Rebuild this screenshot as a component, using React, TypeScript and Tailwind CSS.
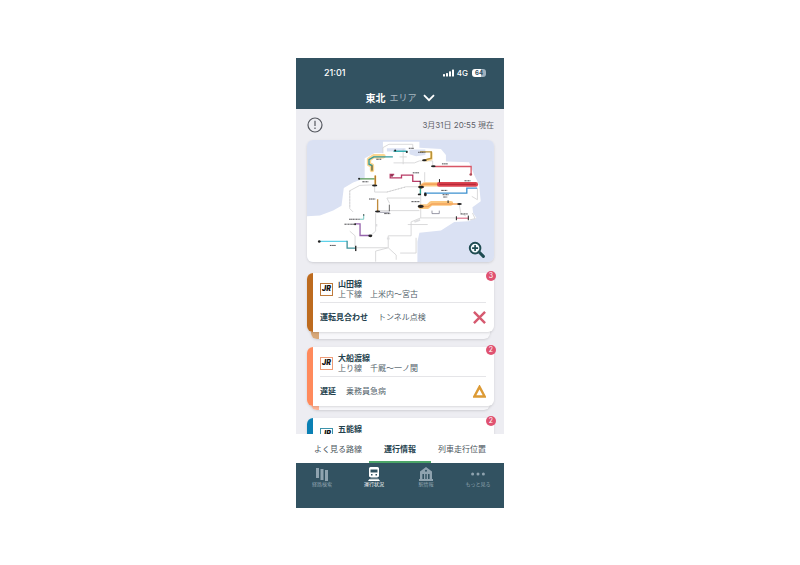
import { useState } from "react";

type Status = "stopped" | "delayed";

type Line = {
  name: string;
  section?: string;
  status?: Status;
  label?: string;
  cause?: string;
  count: number;
  bar: string;
  frame: string;
  corner: string;
  stack: string;
};

const lines: Line[] = [
  {
    name: "山田線",
    section: "上下線　上米内〜宮古",
    status: "stopped",
    label: "運転見合わせ",
    cause: "トンネル点検",
    count: 3,
    bar: "bg-[#bd6b1f]",
    frame: "border-[#bd7a3c]",
    corner: "bg-[#d8a878]",
    stack: "pb-[7px]",
  },
  {
    name: "大船渡線",
    section: "上り線　千厩〜一ノ関",
    status: "delayed",
    label: "遅延",
    cause: "乗務員急病",
    count: 2,
    bar: "bg-[#ff8a5c]",
    frame: "border-[#ee9c78]",
    corner: "bg-[#ffb596]",
    stack: "pb-1",
  },
  {
    name: "五能線",
    count: 2,
    bar: "bg-[#0a80b4]",
    frame: "border-[#3d93ab]",
    corner: "bg-[#85bfd9]",
    stack: "pb-1",
  },
];

const tabs = ["よく見る路線", "運行情報", "列車走行位置"];

function StatusBar() {
  return (
    <div className="flex items-center justify-between pr-[18px] pl-7 pt-2 text-[9px] leading-[14px] font-medium">
      <span>21:01</span>
      <div className="flex items-center gap-0.5">
        <svg viewBox="0 0 12 8" className="h-2 w-3" fill="currentColor" aria-hidden="true">
          <rect x="0" y="5" width="2" height="2.5" rx="0.6" />
          <rect x="3" y="4" width="2" height="3.5" rx="0.6" />
          <rect x="6" y="2.3" width="2" height="5.2" rx="0.6" />
          <rect x="9" y="0.5" width="2" height="7" rx="0.6" />
        </svg>
        <span className="text-[8px]">4G</span>
        <span className="ml-0.5 w-3.5 rounded-[3px] bg-linear-to-r from-white from-65% to-[#9fb0bd] to-65% text-center text-[6px] leading-2 font-bold text-[#34505f]">
          64
        </span>
      </div>
    </div>
  );
}

function RouteMap() {
  return (
    <svg
      viewBox="21 15 564 369"
      className="block w-full rounded-md bg-[#dae1f3]"
      role="img"
      aria-label="東北エリア路線図"
      fill="none"
    >
      <path
        fill="#fff"
        d="M21 245 60 243 100 228 125 213 132 160 160 143 195 130V70L225 54H250V20H360V38L425 42 440 60V80L510 82 525 120 540 150 545 200 520 218 522 235 532 250 508 260 465 262 425 288 360 295 354 322V384H21Z"
      />
      <path fill="#dae1f3" d="M262 40H318V50H262ZM330 44H378V60L350 64 330 58Z" />
      {/* lines running normally */}
      <g stroke="#d2d2d4" strokeWidth="2.5">
        <path d="M250 55V38L268 28H340V38M311 42V88M300 66H322M282 84H345L360 78H400V92M225 152V172H262L320 156H362" />
        <path d="M226 150 180 152 150 168V222L160 232M376 112V142M364 156V250M228 236V290L212 304M270 206 262 190H362" />
        <path d="M364 250 335 262V304H266V340L290 362V376M170 340H264M266 340 228 350V382M302 356H350V310M325 270H385M232 228H360" />
        <path d="M364 250H470M480 208 485 236 500 244M150 290 166 304V336M535 160V195L518 185M520 235 528 252 512 256" />
        <path d="M262 312H270M230 268V276M345 262 362 256" strokeWidth="6" stroke="#dedee0" />
      </g>
      <path d="M150 168V222M262 172 318 157" stroke="#a9a9ac" strokeWidth="2" strokeDasharray="2 7" />
      {/* highlighted sections */}
      <g stroke="#fbd691" strokeLinejoin="round" strokeLinecap="round" strokeWidth="13">
        <path d="M252 64H222L208 74V88L217 92V106" />
        <path d="M396 54V72L380 76" strokeWidth="8" />
        <path d="M227 124V150" strokeWidth="6" />
        <path d="M364 216H385L396 206H455" stroke="#fbc880" strokeWidth="14" />
        <path d="M364 156 374 149H420" stroke="#fbc880" strokeWidth="13" />
      </g>
      <g strokeWidth="4">
        <path d="M280 66H222L208 74V88L217 92V106" stroke="#329a9e" />
        <path d="M217 92V108" stroke="#9c7534" />
        <path d="M282 49H324" stroke="#39b1b4" />
        <path d="M362 51H396V70L370 77" stroke="#b69238" />
        <path d="M178 132H225" stroke="#559653" />
        <path d="M227 122V150" stroke="#b47a29" />
        <path d="M284 119H272V129H306V121H340V140H362" stroke="#b83b66" />
        <path d="M405 95H516V120" stroke="#d85666" />
        <path d="M366 152 376 148H420" stroke="#f5a55c" strokeWidth="5" />
        <path d="M420 149H530" stroke="#db4450" strokeWidth="14" strokeLinecap="round" />
        <path d="M420 149H530" stroke="#b92838" />
        <path d="M374 175H503V160H534" stroke="#3e91cf" />
        <path d="M363 158V180" stroke="#30a999" />
        <path d="M366 216H386L398 208H480" stroke="#f5a55c" />
        <path d="M234 194V230" stroke="#c08b3c" />
        <path d="M166 268H181V303H210" stroke="#9665ad" />
        <path d="M58 321H142" stroke="#5fd1e9" />
        <path d="M142 319V341H168" stroke="#40939b" />
        <path d="M180 254H192V240" stroke="#77c8c1" strokeWidth="3" />
        <path d="M472 251H508" stroke="#e490a4" />
      </g>
      {/* stations */}
      <g fill="#222">
        <ellipse cx="365" cy="157" rx="9" ry="4" />
        <ellipse cx="364" cy="215" rx="9" ry="5" />
        <ellipse cx="225" cy="152" rx="8" ry="3" />
        <ellipse cx="234" cy="231" rx="8" ry="3" />
        <ellipse cx="402" cy="94" rx="7" ry="3" />
        <ellipse cx="375" cy="76" rx="7" ry="3" />
        <ellipse cx="212" cy="304" rx="6" ry="4" />
        <ellipse cx="378" cy="179" rx="4" ry="6" />
        <ellipse cx="360" cy="179" rx="5" ry="3" />
        <ellipse cx="481" cy="208" rx="7" ry="3" />
        <circle cx="178" cy="132" r="3" />
        <circle cx="58" cy="321" r="4" />
        <circle cx="166" cy="269" r="3" />
        <circle cx="287" cy="47" r="3" />
        <circle cx="322" cy="51" r="3" />
        <circle cx="515" cy="119" r="4" fill="#b04a58" />
        <circle cx="277" cy="122" r="4" fill="#8d3352" />
        <circle cx="192" cy="241" r="2" />
        <rect x="166" y="334" width="4" height="16" />
        <rect x="419" y="133" width="3" height="10" />
        <rect x="445" y="197" width="3" height="8" />
        <rect x="470" y="245" width="3" height="12" />
        <rect x="506" y="243" width="3" height="14" />
        <rect x="268" y="210" width="2" height="20" />
        <rect x="361" y="138" width="3" height="12" />
      </g>
      <path d="M398 228V237H420V228M240 233H270" stroke="#67677b" strokeWidth="2" />
      <g stroke="#4c4c50" strokeWidth="3" strokeDasharray="5 1 3 1">
        <path d="M230 73H246M328 40H344M356 52H378M428 87H446M340 114H360M496 138H514M188 141H206M208 193H228M336 201H360M430 180H448M432 187H444M148 254H180M134 269H166M90 333H108M254 237H272M484 238H506M426 167H444" />
      </g>
      <g stroke="#1f4c52" strokeWidth="6">
        <circle cx="528" cy="341" r="16" fill="#f4fafc" />
        <path d="M519 341H537M528 332V350" strokeWidth="5" />
        <path d="M540 353 553 366" strokeWidth="9" strokeLinecap="round" />
      </g>
    </svg>
  );
}

function StatusIcon({ status }: { status: Status }) {
  if (status === "stopped") {
    return (
      <svg viewBox="0 0 14 14" className="size-[13px]" fill="none" stroke="#d65a70" strokeWidth="2.6" role="img" aria-label="運転見合わせ">
        <path d="M1 1 13 13M13 1 1 13" />
      </svg>
    );
  }
  return (
    <svg viewBox="0 0 14 14" className="size-[13px]" fill="none" stroke="#dc9a35" strokeWidth="2.6" role="img" aria-label="遅延">
      <path d="M7 2 12.6 12.4H1.4Z" />
    </svg>
  );
}

function LineCard({ line }: { line: Line }) {
  return (
    <article className={`relative shrink-0 ${line.stack}`}>
      <div className="absolute right-1 bottom-0 left-1 h-4 overflow-hidden rounded-md bg-[#f8f8fb] shadow-sm">
        <div className={`h-full w-2 ${line.corner}`} />
      </div>
      <div className="relative flex overflow-hidden rounded-md bg-white shadow-sm">
        <div className={`w-1.5 shrink-0 ${line.bar}`} />
        <div className="min-w-0 flex-1 pr-2 pl-[7px]">
          <div className="flex items-center gap-[5px] border-b border-[#e5e5e8] pt-1.5 pb-[3px]">
            <span className={`flex size-[13px] items-center justify-center border bg-white text-[7px] font-black text-[#111] italic ${line.frame}`}>
              JR
            </span>
            <div className="min-h-5 text-[8px] leading-[10px]">
              <h2 className="font-bold text-[#23414d]">{line.name}</h2>
              {line.section && <p className="text-[#53626b]">{line.section}</p>}
            </div>
          </div>
          {line.status && (
            <div className="flex items-center py-2 text-[8px] leading-[13px]">
              <strong className="mr-2.5 font-bold text-[#23414d]">{line.label}</strong>
              <span className="flex-1 text-[#53626b]">{line.cause}</span>
              <StatusIcon status={line.status} />
            </div>
          )}
        </div>
      </div>
      <span className="absolute -top-0.5 -right-0.5 size-2.5 rounded-full bg-[#e05271] text-center text-[7px] leading-[10px] text-white">
        {line.count}
      </span>
    </article>
  );
}

const navItems = [
  {
    label: "経路検索",
    icon: <path d="M1 1H4V11H1ZM5.5 2H8.5V13H5.5ZM10 3H13V14H10Z" />,
  },
  {
    label: "運行状況",
    icon: (
      <path
        fillRule="evenodd"
        d="M3.5 0H10.5Q12 0 12 1.5V9Q12 10 11 10H3Q2 10 2 9V1.5Q2 0 3.5 0ZM3.5 2.5V5.5H10.5V2.5ZM4 7V8.5H5.5V7ZM8.5 7V8.5H10V7ZM3.5 10.5H10.5L13 14H1L2.2 12.3H11.8L10.7 11.2H3.3Z"
      />
    ),
  },
  {
    label: "駅情報",
    icon: (
      <path
        fillRule="evenodd"
        d="M7 0 13 4.5V12H14V14H0V12H1V4.5ZM3.4 7V12H5V7ZM6.3 7V12H7.7V7ZM9 7V12H10.6V7ZM7 2.8A1 1 0 1 0 7 4.8A1 1 0 1 0 7 2.8Z"
      />
    ),
  },
  {
    label: "もっと見る",
    icon: (
      <>
        <circle cx="1.6" cy="7" r="1.5" />
        <circle cx="7" cy="7" r="1.5" />
        <circle cx="12.4" cy="7" r="1.5" />
      </>
    ),
  },
];

export default function App() {
  const [tab, setTab] = useState("運行情報");
  const [page, setPage] = useState("運行状況");

  return (
    <div className="flex h-screen justify-center bg-white pt-[58px] pb-[57px] font-[Inter,'Noto_Sans_CJK_JP',sans-serif]">
      <div className="flex w-full max-w-52 flex-col overflow-hidden bg-[#ededf2]">
        <header className="bg-[#325261] text-white">
          <StatusBar />
          <button className="flex w-full items-center justify-center gap-1 pt-[11px] pb-1 leading-[14px]">
            <span className="text-[10px] font-bold">東北</span>
            <span className="text-[9px] text-[#a8b8c1]">エリア</span>
            <svg viewBox="0 0 12 8" className="ml-0.5 h-2 w-3" fill="none" stroke="currentColor" strokeWidth="1.8" aria-hidden="true">
              <path d="M1 1.2 6 6.2 11 1.2" />
            </svg>
          </button>
        </header>

        <main className="flex min-h-0 flex-1 flex-col gap-[7px] overflow-hidden pt-2 pr-2.5 pl-[11px]">
          <div className="flex items-center justify-between text-[8px] leading-4 text-[#5d6068]">
            <button aria-label="お知らせ">
              <svg viewBox="0 0 16 16" className="block size-4" fill="none" stroke="#55585f" strokeWidth="1.2">
                <circle cx="8" cy="8" r="7" />
                <path d="M8 3.8V9M8 10.5V12" />
              </svg>
            </button>
            <time>3月31日 20:55 現在</time>
          </div>
          <div className="shrink-0 rounded-md shadow-sm">
            <RouteMap />
          </div>
          <div className="flex flex-col gap-2 pt-1">
            {lines.map((line) => (
              <LineCard key={line.name} line={line} />
            ))}
          </div>
        </main>

        <div className="grid grid-cols-3 bg-white px-[11px]">
          {tabs.map((t) => (
            <button
              key={t}
              onClick={() => setTab(t)}
              className={
                t === tab
                  ? "border-b-2 border-[#4ca568] pt-1 text-[8px] leading-[23px] font-bold text-[#23414d]"
                  : "border-b-2 border-transparent pt-1 text-[8px] leading-[23px] text-[#4a555c]"
              }
            >
              {t}
            </button>
          ))}
        </div>

        <nav className="grid grid-cols-4 bg-[#325261] pt-1 pb-5">
          {navItems.map((item) => (
            <button
              key={item.label}
              onClick={() => setPage(item.label)}
              className={
                item.label === page
                  ? "flex flex-col items-center text-white"
                  : "flex flex-col items-center text-[#8fa3af]"
              }
            >
              <svg viewBox="0 0 14 14" className="size-3.5" fill="currentColor" aria-hidden="true">
                {item.icon}
              </svg>
              <span className="text-[5px] leading-[7px]">{item.label}</span>
            </button>
          ))}
        </nav>
      </div>
    </div>
  );
}
